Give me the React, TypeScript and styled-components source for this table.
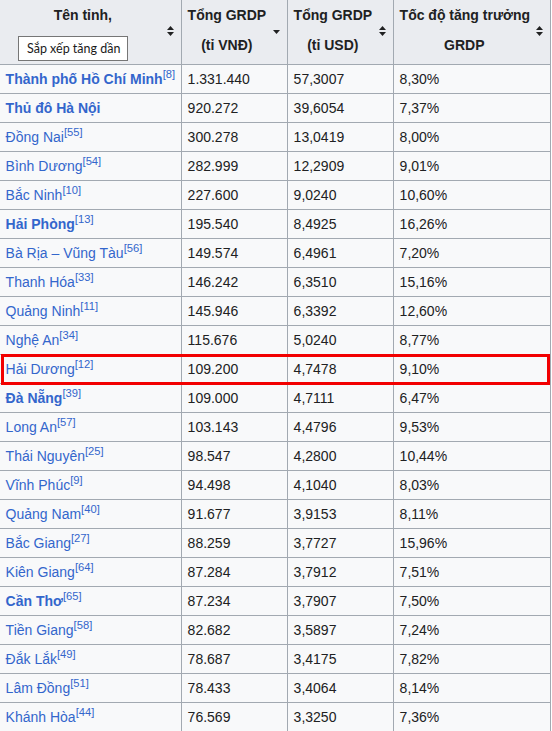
import React from "react";
import styled, { createGlobalStyle } from "styled-components";

const Global = createGlobalStyle`
  html, body { margin: 0; padding: 0; background: #ffffff; }
  body { overflow: hidden; }
`;

const Page = styled.div`
  position: relative;
  width: 552px;
  height: 731px;
  overflow: hidden;
  background: #ffffff;
  font-family: "Liberation Sans", Arial, sans-serif;
  font-size: 14px;
  color: #202122;
`;

const Table = styled.table`
  border-collapse: collapse;
  table-layout: fixed;
  margin: -1px 0 0 -1px;
  width: 551px;
  background: #f8f9fa;
  color: #202122;
`;

const HeadCell = styled.th`
  position: relative;
  background: #eaecf0;
  border: 1px solid #a2a9b1;
  font-weight: bold;
  text-align: center;
  line-height: 30px;
  padding: 0 21px 4px 5.6px;
  vertical-align: middle;
  white-space: nowrap;
`;

const Cell = styled.td`
  border: 1px solid #a2a9b1;
  padding: 2.8px 5.6px;
  line-height: 22.4px;
  white-space: nowrap;
`;

const Place = styled.a<{ $bold?: boolean }>`
  color: #3366cc;
  text-decoration: none;
  font-weight: ${(p) => (p.$bold ? "bold" : "normal")};
`;

const Ref = styled.sup`
  font-size: 80%;
  line-height: 1;
  vertical-align: super;
  color: #3366cc;
  font-weight: normal;
`;

const SortIcon = styled.span`
  position: absolute;
  right: 6px;
  top: 50%;
  width: 9px;
  height: 10px;
  margin-top: -6px;
  display: flex;
  align-items: center;
  justify-content: center;
`;

const Tooltip = styled.div`
  position: absolute;
  left: 18px;
  top: 36px;
  width: 110px;
  height: 25px;
  box-sizing: border-box;
  padding: 0 0 1px 8px;
  display: flex;
  align-items: center;
  background: #ffffff;
  border: 1px solid #767676;
  font-family: Lato, "Noto Sans", sans-serif;
  font-size: 12.5px;
  color: #1a1a1a;
  white-space: nowrap;
`;

const Highlight = styled.div`
  position: absolute;
  left: 1px;
  top: 354px;
  width: 549px;
  height: 31px;
  box-sizing: border-box;
  border: 3px solid #f20000;
  pointer-events: none;
`;

const BothArrows = () => (
  <svg width="7" height="10" viewBox="0 0 7 10">
    <path d="M0 4 L3.5 0 L7 4 Z" fill="#202122" />
    <path d="M0 6 L3.5 10 L7 6 Z" fill="#202122" />
  </svg>
);

const DownArrow = () => (
  <svg width="7" height="10" viewBox="0 0 7 10">
    <path d="M0 4 L3.5 8 L7 4 Z" fill="#202122" />
  </svg>
);

type Row = { name: string; ref?: string; bold?: boolean; vnd: string; usd: string; rate: string };

const rows: Row[] = [
  { name: "Thành phố Hồ Chí Minh", ref: "8", bold: true, vnd: "1.331.440", usd: "57,3007", rate: "8,30%" },
  { name: "Thủ đô Hà Nội", bold: true, vnd: "920.272", usd: "39,6054", rate: "7,37%" },
  { name: "Đồng Nai", ref: "55", vnd: "300.278", usd: "13,0419", rate: "8,00%" },
  { name: "Bình Dương", ref: "54", vnd: "282.999", usd: "12,2909", rate: "9,01%" },
  { name: "Bắc Ninh", ref: "10", vnd: "227.600", usd: "9,0240", rate: "10,60%" },
  { name: "Hải Phòng", ref: "13", bold: true, vnd: "195.540", usd: "8,4925", rate: "16,26%" },
  { name: "Bà Rịa – Vũng Tàu", ref: "56", vnd: "149.574", usd: "6,4961", rate: "7,20%" },
  { name: "Thanh Hóa", ref: "33", vnd: "146.242", usd: "6,3510", rate: "15,16%" },
  { name: "Quảng Ninh", ref: "11", vnd: "145.946", usd: "6,3392", rate: "12,60%" },
  { name: "Nghệ An", ref: "34", vnd: "115.676", usd: "5,0240", rate: "8,77%" },
  { name: "Hải Dương", ref: "12", vnd: "109.200", usd: "4,7478", rate: "9,10%" },
  { name: "Đà Nẵng", ref: "39", bold: true, vnd: "109.000", usd: "4,7111", rate: "6,47%" },
  { name: "Long An", ref: "57", vnd: "103.143", usd: "4,4796", rate: "9,53%" },
  { name: "Thái Nguyên", ref: "25", vnd: "98.547", usd: "4,2800", rate: "10,44%" },
  { name: "Vĩnh Phúc", ref: "9", vnd: "94.498", usd: "4,1040", rate: "8,03%" },
  { name: "Quảng Nam", ref: "40", vnd: "91.677", usd: "3,9153", rate: "8,11%" },
  { name: "Bắc Giang", ref: "27", vnd: "88.259", usd: "3,7727", rate: "15,96%" },
  { name: "Kiên Giang", ref: "64", vnd: "87.284", usd: "3,7912", rate: "7,51%" },
  { name: "Cần Thơ", ref: "65", bold: true, vnd: "87.234", usd: "3,7907", rate: "7,50%" },
  { name: "Tiền Giang", ref: "58", vnd: "82.682", usd: "3,5897", rate: "7,24%" },
  { name: "Đắk Lắk", ref: "49", vnd: "78.687", usd: "3,4175", rate: "7,82%" },
  { name: "Lâm Đồng", ref: "51", vnd: "78.433", usd: "3,4064", rate: "8,14%" },
  { name: "Khánh Hòa", ref: "44", vnd: "76.569", usd: "3,3250", rate: "7,36%" },
];

export default function App() {
  return (
    <Page>
      <Global />
      <Table>
        <colgroup>
          <col style={{ width: 182 }} />
          <col style={{ width: 106 }} />
          <col style={{ width: 106 }} />
          <col style={{ width: 157 }} />
        </colgroup>
        <thead>
          <tr>
            <HeadCell>
              Tên tỉnh,
              <br />
              thành phố
              <SortIcon><BothArrows /></SortIcon>
            </HeadCell>
            <HeadCell>
              Tổng GRDP
              <br />
              (tỉ VNĐ)
              <SortIcon><DownArrow /></SortIcon>
            </HeadCell>
            <HeadCell>
              Tổng GRDP
              <br />
              (tỉ USD)
              <SortIcon><BothArrows /></SortIcon>
            </HeadCell>
            <HeadCell>
              Tốc độ tăng trưởng
              <br />
              GRDP
              <SortIcon><BothArrows /></SortIcon>
            </HeadCell>
          </tr>
        </thead>
        <tbody>
          {rows.map((r) => (
            <tr key={r.name}>
              <Cell>
                <Place $bold={r.bold}>{r.name}</Place>
                {r.ref && <Ref>[{r.ref}]</Ref>}
              </Cell>
              <Cell>{r.vnd}</Cell>
              <Cell>{r.usd}</Cell>
              <Cell>{r.rate}</Cell>
            </tr>
          ))}
        </tbody>
      </Table>
      <Tooltip>Sắp xếp tăng dần</Tooltip>
      <Highlight />
    </Page>
  );
}
